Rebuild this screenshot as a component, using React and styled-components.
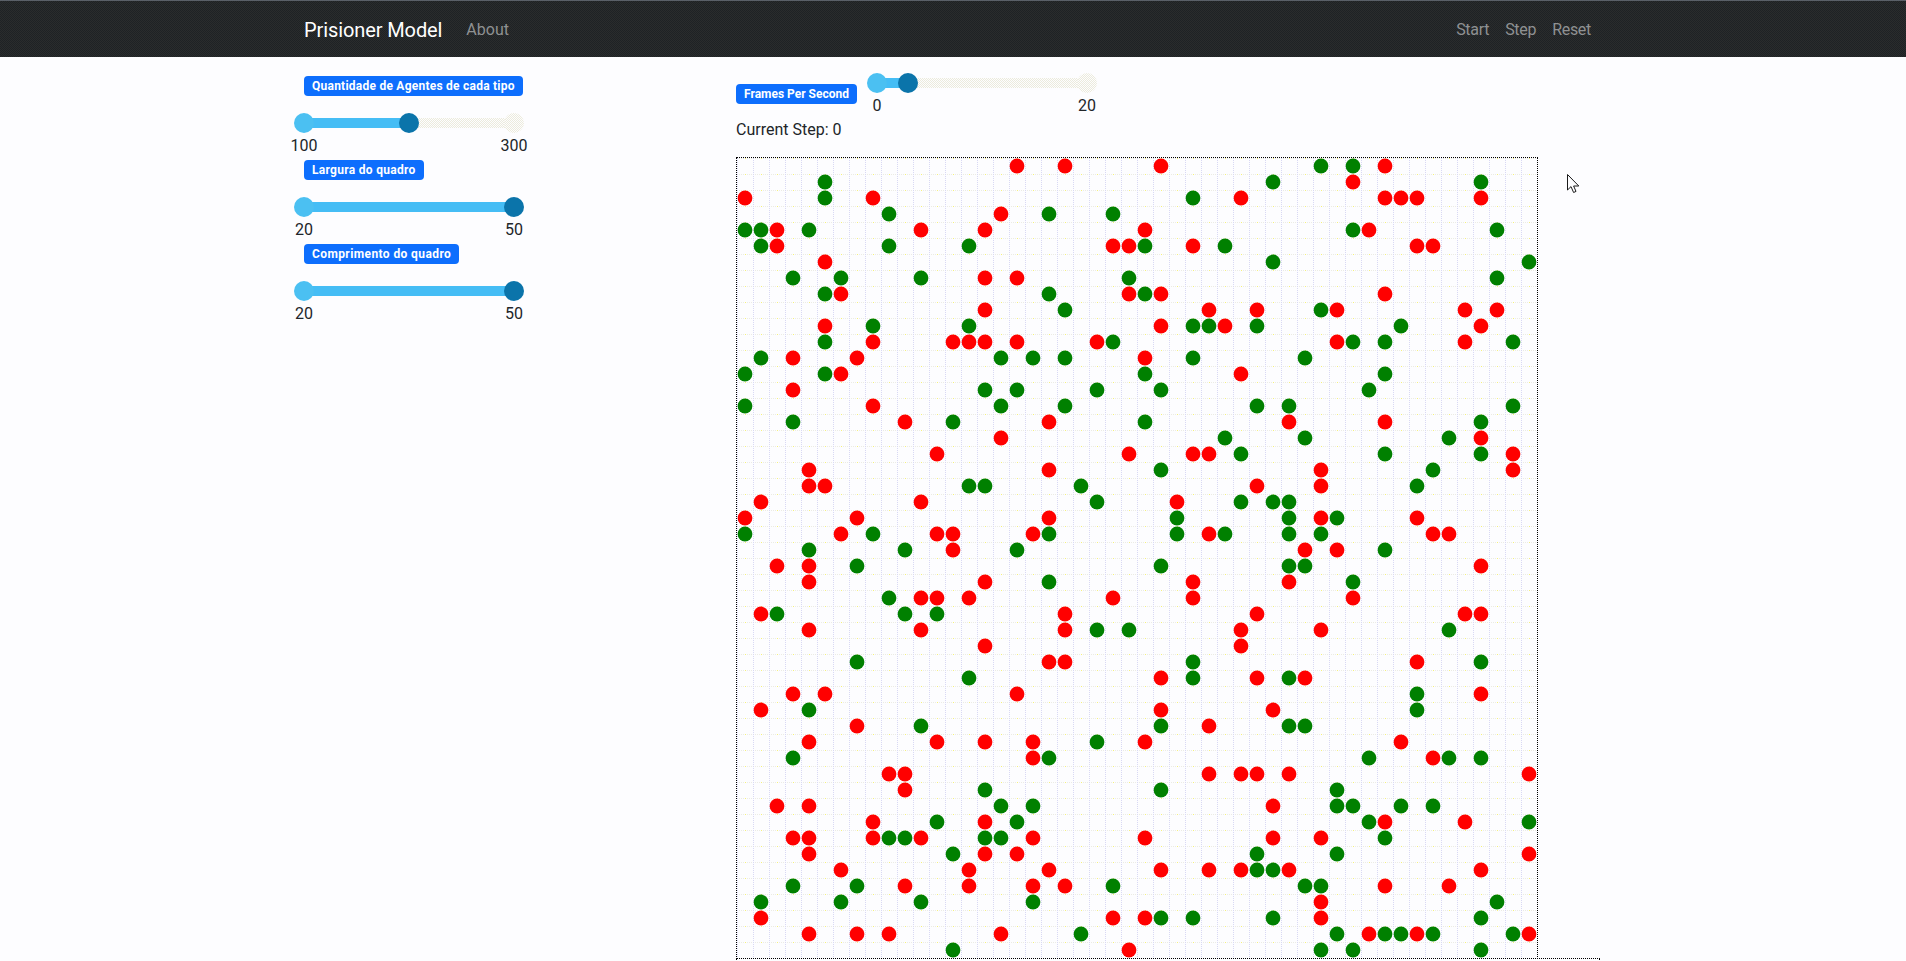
import React from 'react';
import styled, { createGlobalStyle } from 'styled-components';

const GlobalStyle = createGlobalStyle`
  html, body {
    margin: 0;
    height: 100%;
    overflow: hidden;
    background: #fdfdff;
    color: #212529;
    font-family: Roboto, "Liberation Sans", sans-serif;
    font-size: 16px;
    line-height: 24px;
  }
`;

// one string per row of the board, r = red agent, g = green agent, number = column
const AGENTS = [
  'r17 r20 r26 g36 g38 r40',
  'g5 g33 r38 g46',
  'r0 g5 r8 g28 r31 r40 r41 r42 r46',
  'g9 r16 g19 g23',
  'g0 g1 r2 g4 r11 r15 r25 g38 r39 g47',
  'g1 r2 g9 g14 r23 r24 g25 r28 g30 r42 r43',
  'r5 g33 g49',
  'g3 g6 g11 r15 r17 g24 g47',
  'g5 r6 g19 r24 g25 r26 r40',
  'r15 g20 r29 r32 g36 r37 r45 r47',
  'r5 g8 g14 r26 g28 g29 r30 g32 g41 r46',
  'g5 r8 r13 r14 r15 r17 r22 g23 r37 g38 g40 r45 g48',
  'g1 r3 r7 g16 g18 g20 r25 g28 g35',
  'g0 g5 r6 g25 r31 g40',
  'r3 g15 g17 g22 g26 g39',
  'g0 r8 g16 g20 g32 g34 g48',
  'g3 r10 g13 r19 g25 r34 r40 g46',
  'r16 g30 g35 g44 r46',
  'r12 r24 r28 r29 g31 g40 g46 r48',
  'r4 r19 g26 r36 g43 r48',
  'r4 r5 g14 g15 g21 r32 r36 g42',
  'r1 r11 g22 r27 g31 g33 g34',
  'r0 r7 r19 g27 g34 r36 g37 r42',
  'g0 r6 g8 r12 r13 r18 g19 g27 r29 g30 g34 g36 r43 r44',
  'g4 g10 r13 g17 r35 r37 g40',
  'r2 r4 g7 g26 g34 g35 r46',
  'r4 r15 g19 r28 r34 g38',
  'g9 r11 r12 r14 r23 r28 r38',
  'r1 g2 g10 g12 r20 r32 r45 r46',
  'r4 r11 r20 g22 g24 r31 r36 g44',
  'r15 r31',
  'g7 r19 r20 g28 r42 g46',
  'g14 r26 g28 r32 g34 r35',
  'r3 r5 r17 g42 r46',
  'r1 g4 r26 r33 g42',
  'r7 g11 g26 r29 g34 g35',
  'r4 r12 r15 r18 g22 r25 r41',
  'g3 r18 g19 g39 r43 g44 g46',
  'r9 r10 r29 r31 r32 r34 r49',
  'r10 g15 g26 g37',
  'r2 r4 g16 g18 r33 g37 g38 g41 g43',
  'r8 g12 r15 g17 g39 r40 r45 g49',
  'r3 r4 r8 g9 g10 r11 g15 g16 r18 r25 r33 r36 g40',
  'r4 g13 r15 r17 g32 g37 r49',
  'r6 r14 r19 r26 r29 r31 g32 g33 r34 r46',
  'g3 g7 r10 r14 r18 r20 g23 g35 g36 r40 r44',
  'g1 g6 g11 g18 r36 g47',
  'r1 r23 r25 g26 g28 g33 r36 g46',
  'r4 r7 r9 r16 g21 g37 r39 g40 g41 r42 g43 g48 r49',
  'g13 r24 g36 g38 g46',
];

const CELL = 16;
const agentList = AGENTS.flatMap((line, row) =>
  line.split(' ').map((item) => ({
    row,
    col: Number(item.slice(1)),
    fill: item[0] === 'r' ? '#ff0000' : '#008000',
  }))
);

const Navbar = styled.nav`
  height: 56px;
  border-top: 1px solid #5a6068;
  background-color: #25282a;
  background-image: repeating-conic-gradient(#1e2225 0 25%, #2a2c2c 0 50%);
  background-size: 2px 2px;
`;

const NavInner = styled.div`
  width: 1320px;
  height: 100%;
  margin: 0 auto;
  padding: 2px 22px 0 11px;
  box-sizing: border-box;
  display: flex;
  align-items: center;
  gap: 16px;
`;

const Brand = styled.a`
  color: #fff;
  font-size: 20px;
  letter-spacing: -0.1px;
  margin-right: 8px;
`;

const NavLink = styled.a`
  color: #8f9192;
  font-size: 16px;
  letter-spacing: ${(p) => (p.$tight ? '-0.3px' : '0')};
  margin-left: ${(p) => (p.$push ? 'auto' : '0')};
`;

const Main = styled.main`
  width: 1320px;
  margin: 0 auto;
  display: grid;
  grid-template-columns: 443px 1fr;
`;

const SideColumn = styled.div`
  padding: 17px 0 0 1px;
`;

const BoardColumn = styled.div`
  padding-top: 16px;
`;

const Group = styled.div`
  width: 230px;
  display: flex;
  flex-direction: column;
  margin-left: ${(p) => p.$left || 0}px;
`;

const Badge = styled.span`
  display: block;
  width: fit-content;
  margin: ${(p) => p.$margin || '2px 0 2px 10px'};
  padding: 0 8px;
  height: 20px;
  box-sizing: border-box;
  border-radius: 4px;
  background: #0d6efd;
  color: #fff;
  font-size: 12px;
  font-weight: 700;
  letter-spacing: ${(p) => p.$spacing}px;
  line-height: 20px;
  white-space: nowrap;
`;

const SliderBox = styled.div`
  position: relative;
  width: 230px;
  height: 20px;
  padding: 5px 10px;
  box-sizing: border-box;
  margin-top: ${(p) => p.$top}px;
`;

const Rail = styled.div`
  height: 10px;
  background-image: repeating-conic-gradient(#ecebdc 0 25%, #fdfdff 0 50%);
  background-size: 2px 2px;
`;

const Fill = styled.div`
  height: 100%;
  background: #45bdf5;
`;

const Handle = styled.span`
  position: absolute;
  top: 0;
  width: 20px;
  height: 20px;
  border-radius: 50%;
  margin-left: -10px;
`;

const StartHandle = styled(Handle)`
  left: 10px;
  background: #4bc0f2;
`;

const ValueHandle = styled(Handle)`
  background: #0b74aa;
`;

const EndHandle = styled(Handle)`
  left: 220px;
  background-image: repeating-conic-gradient(#ecebdc 0 25%, #fdfdff 0 50%);
  background-size: 2px 2px;
`;

const Limits = styled.div`
  display: flex;
  justify-content: space-between;
  margin-top: 1px;
`;

const Limit = styled.span`
  width: 20px;
  display: flex;
  justify-content: center;
`;

const TopRow = styled.div`
  display: flex;
  align-items: flex-start;
`;

const StepText = styled.div`
  height: 24px;
  margin-bottom: 15px;
`;

const Board = styled.svg`
  display: block;
  width: 800px;
  height: 800px;
  border: 1px dotted #000;
`;

const BelowBoard = styled.div`
  width: 862px;
  height: 60px;
  margin-top: -1px;
  border: 1px dotted #000;
`;

const Cursor = styled.svg`
  position: absolute;
  left: 1566px;
  top: 173px;
`;

const Slider = ({ min, max, value, top = 15 }) => {
  const percent = ((value - min) / (max - min)) * 100;
  return (
    <div>
      <SliderBox $top={top}>
        <Rail>
          <Fill style={{ width: `${percent}%` }} />
        </Rail>
        {value < max && <EndHandle />}
        <StartHandle />
        <ValueHandle style={{ left: `${10 + percent * 2.1}px` }} />
      </SliderBox>
      <Limits>
        <Limit>{min}</Limit>
        <Limit>{max}</Limit>
      </Limits>
    </div>
  );
};

export default function App() {
  return (
    <>
      <GlobalStyle />
      <Navbar>
        <NavInner>
          <Brand>Prisioner Model</Brand>
          <NavLink>About</NavLink>
          <NavLink $push $tight>Start</NavLink>
          <NavLink $tight>Step</NavLink>
          <NavLink $tight>Reset</NavLink>
        </NavInner>
      </Navbar>
      <Main>
        <SideColumn>
          <Group>
            <Badge $spacing={0.24}>Quantidade de Agentes de cada tipo</Badge>
            <Slider min={100} max={300} value={200} />
          </Group>
          <Group>
            <Badge $spacing={0.3}>Largura do quadro</Badge>
            <Slider min={20} max={50} value={50} />
          </Group>
          <Group>
            <Badge $spacing={0.4}>Comprimento do quadro</Badge>
            <Slider min={20} max={50} value={50} />
          </Group>
        </SideColumn>
        <BoardColumn>
          <TopRow>
            <Badge $margin="11px 0 0 0" $spacing={0}>Frames Per Second</Badge>
            <Group $left={10}>
              <Slider min={0} max={20} value={3} top={0} />
            </Group>
          </TopRow>
          <StepText>Current Step: 0</StepText>
          <Board viewBox="0 0 800 800">
            <defs>
              <pattern id="cell" width={CELL} height={CELL} patternUnits="userSpaceOnUse">
                <path d="M0 0.5H16" stroke="#ecece4" strokeDasharray="1 1" fill="none" />
                <path d="M0 0.5H16" stroke="#f6f27a" strokeDasharray="1 7" fill="none" />
                <path d="M0.5 0V16" stroke="#d8d8f4" strokeDasharray="1 1" fill="none" />
              </pattern>
            </defs>
            <rect width="800" height="800" fill="url(#cell)" />
            {agentList.map((a) => (
              <circle
                key={`${a.row}-${a.col}`}
                cx={a.col * CELL + 8}
                cy={a.row * CELL + 8}
                r="7.4"
                fill={a.fill}
              />
            ))}
          </Board>
          <BelowBoard />
        </BoardColumn>
      </Main>
      <Cursor width="14" height="21" viewBox="0 0 14 21">
        <path
          d="M1.5 1.5V17L5 13.6L7.6 19.5L10 18.4L7.6 13H12.8Z"
          fill="#fdfdff"
          stroke="#1a1a1a"
          strokeWidth="1"
        />
      </Cursor>
    </>
  );
}
